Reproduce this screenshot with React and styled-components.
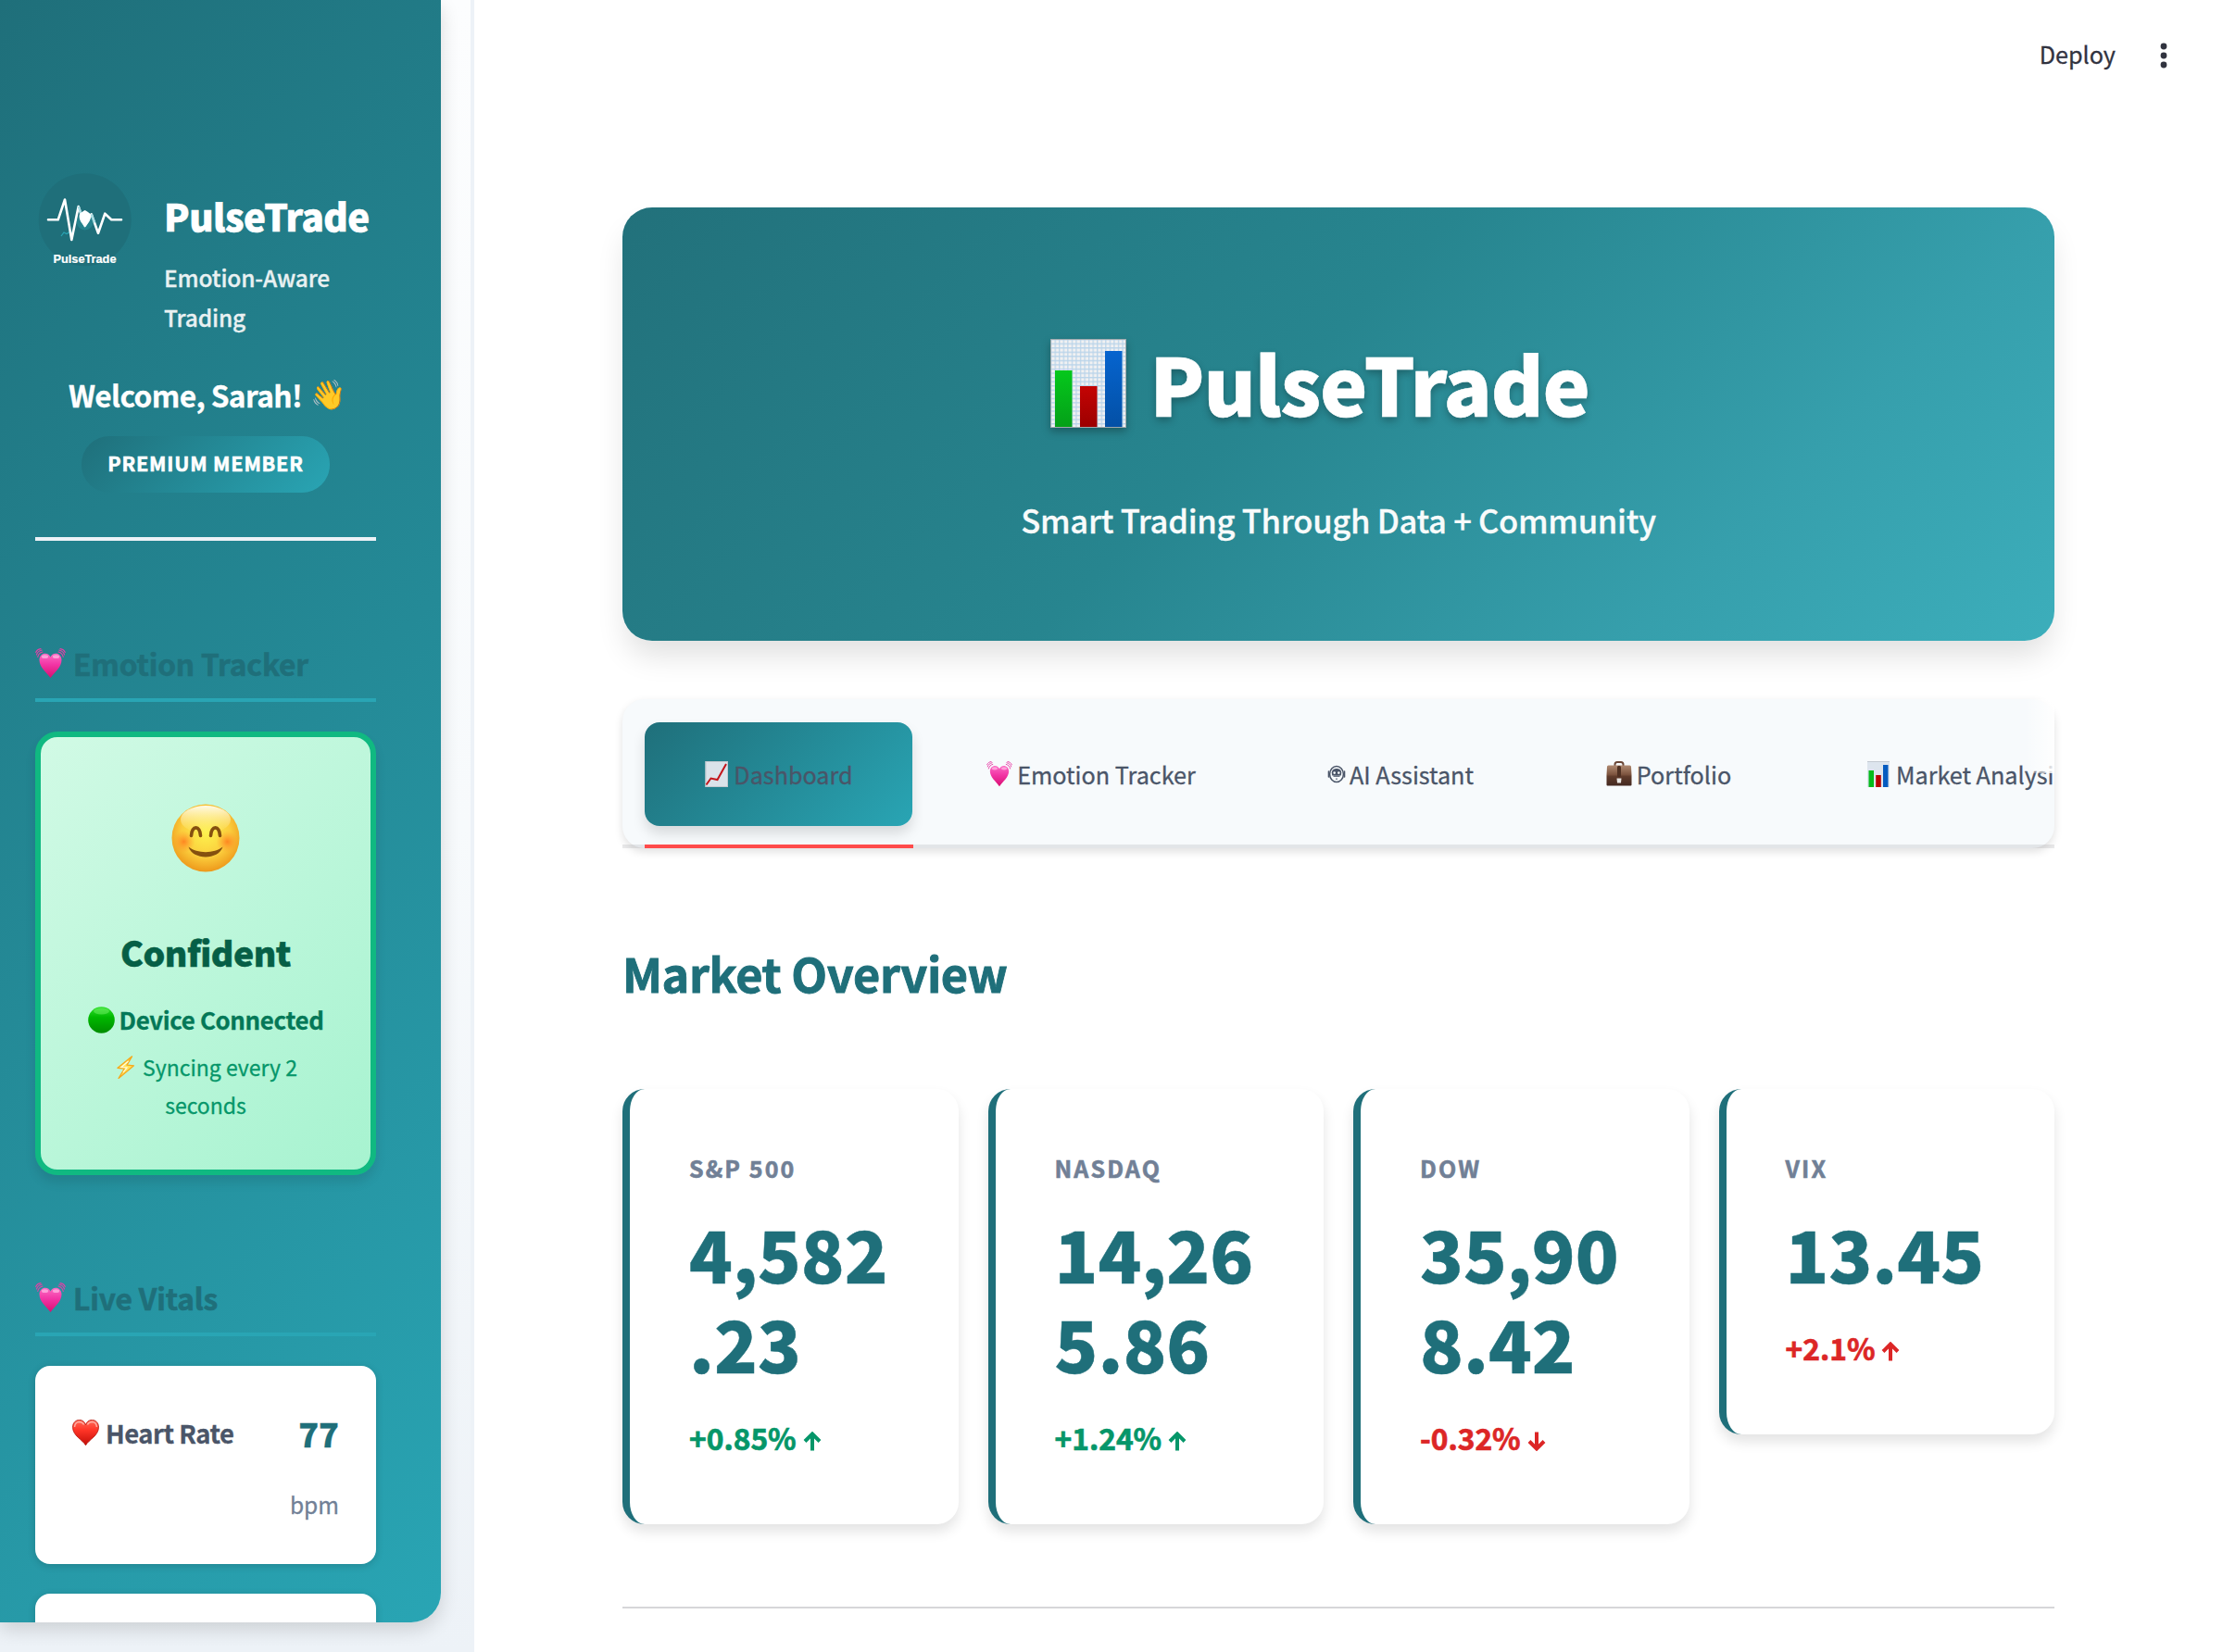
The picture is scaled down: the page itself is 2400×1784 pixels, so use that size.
import React from "react";
import styled, { createGlobalStyle } from "styled-components";

const FONT = `"Noto Sans CJK SC", "Noto Sans", sans-serif`;
const DARK = "#1f6f7a";
const TEAL = "#29a5b4";

const Global = createGlobalStyle`
  * { box-sizing: border-box; }
  body { margin: 0; background: #ffffff; font-family: ${FONT}; }
  svg { display: block; flex: none; }
`;

const Page = styled.div`
  display: flex;
  width: 2400px;
  height: 1784px;
  overflow: hidden;
  background: #ffffff;
  -webkit-text-stroke: 0.3px currentColor;
`;

/* ---------- sidebar ---------- */

const Sidebar = styled.aside`
  width: 512px;
  height: 1784px;
  flex: none;
  border-right: 4px solid #edf2f7;
  background: linear-gradient(180deg, #fcfdfe 0%, #f7fafc 50%, #edf2f7 100%);
`;

const Panel = styled.div`
  width: 476px;
  height: 1752px;
  padding: 183px 70px 0 38px;
  overflow: hidden;
  display: flex;
  flex-direction: column;
  border-radius: 0 0 32px 0;
  background: linear-gradient(135deg, ${DARK} 0%, ${TEAL} 100%);
  box-shadow: 0 8px 20px rgba(0, 0, 0, 0.14);
  > * { flex: none; }
`;

const Brand = styled.div`
  display: flex;
  gap: 31px;
  height: 181px;
`;

const BrandText = styled.div`
  display: flex;
  flex-direction: column;
  padding-top: 26px;
  white-space: nowrap;
`;

const BrandName = styled.div`
  font-size: 40.3px;
  font-weight: 900;
  line-height: 48px;
  letter-spacing: -0.5px;
  color: #ffffff;
  -webkit-text-stroke-width: 0.6px;
`;

const BrandTag = styled.div`
  margin-top: 21px;
  font-size: 24.5px;
  font-weight: 500;
  line-height: 43px;
  letter-spacing: -0.15px;
  color: #e9f1f2;
`;

const Welcome = styled.div`
  display: flex;
  justify-content: center;
  align-items: center;
  gap: 9px;
  margin-top: 42px;
  padding-left: 2px;
  height: 40px;
  font-size: 31.7px;
  font-weight: 700;
  line-height: 40px;
  letter-spacing: -0.63px;
  color: #ffffff;
`;

const Wave = styled.span`
  font-family: "Noto Color Emoji", sans-serif;
  font-size: 31px;
  line-height: 36px;
  letter-spacing: 0;
  width: 37px;
  margin-top: 1px;
  -webkit-text-stroke-width: 0;
`;

const Badge = styled.div`
  align-self: center;
  width: 268px;
  height: 61px;
  margin-top: 25px;
  border-radius: 30px;
  background: linear-gradient(135deg, ${DARK} 0%, ${TEAL} 100%);
  color: #ffffff;
  font-size: 21.6px;
  font-weight: 700;
  line-height: 58px;
  letter-spacing: 0.8px;
  text-align: center;
  -webkit-text-stroke-width: 0.6px;
`;

const Rule = styled.div`
  height: 4px;
  margin-top: 48px;
  background: #edf2f7;
`;

const SectionTitle = styled.h3`
  display: flex;
  align-items: center;
  gap: 8px;
  height: 63px;
  margin: 111px 0 32px;
  padding-bottom: 17px;
  border-bottom: 4px solid ${TEAL};
  font-size: 31.7px;
  font-weight: 700;
  line-height: 40px;
  letter-spacing: -0.16px;
  color: ${DARK};
  -webkit-text-stroke-width: 0.6px;
`;

const MoodCard = styled.div`
  display: flex;
  flex-direction: column;
  align-items: center;
  height: 479px;
  padding-top: 72px;
  border: 6px solid #10b981;
  border-radius: 24px;
  background: linear-gradient(135deg, #d1fae5 0%, #a7f3d0 100%);
  box-shadow: 0 8px 12px rgba(0, 0, 0, 0.1);
`;

const Mood = styled.div`
  margin-top: 64px;
  font-size: 37.4px;
  font-weight: 900;
  line-height: 44px;
  letter-spacing: -0.5px;
  color: #065f46;
  -webkit-text-stroke-width: 0.5px;
`;

const Device = styled.div`
  display: flex;
  align-items: center;
  gap: 5px;
  margin-top: 28px;
  font-size: 25.9px;
  font-weight: 700;
  line-height: 46px;
  letter-spacing: -0.37px;
  color: #047857;
`;

const Sync = styled.div`
  display: flex;
  flex-direction: column;
  align-items: center;
  margin-top: 8px;
  font-size: 23px;
  line-height: 41px;
  color: #059669;
`;

const SyncLine = styled.div`
  display: flex;
  align-items: center;
  gap: 6px;
`;

const VitalCard = styled.div`
  display: flex;
  justify-content: space-between;
  height: 214px;
  margin-bottom: 32px;
  padding: 40px 40px 0;
  border-radius: 16px;
  background: #ffffff;
  box-shadow: 0 2px 8px rgba(0, 0, 0, 0.16);
`;

const VitalName = styled.div`
  display: flex;
  align-items: center;
  gap: 7px;
  height: 48px;
  margin-top: 8px;
  font-size: 27.4px;
  font-weight: 700;
  line-height: 48px;
  letter-spacing: -0.48px;
  color: #4a5568;
`;

const VitalReading = styled.div`
  display: flex;
  flex-direction: column;
  align-items: flex-end;
`;

const VitalValue = styled.div`
  font-size: 36px;
  font-weight: 900;
  line-height: 64px;
  color: ${DARK};
`;

const VitalUnit = styled.div`
  margin-top: 24px;
  font-size: 24.5px;
  line-height: 44px;
  color: #718096;
`;

/* ---------- main ---------- */

const Main = styled.main`
  flex: 1;
  display: flex;
  flex-direction: column;
`;

const TopBar = styled.header`
  display: flex;
  justify-content: flex-end;
  gap: 40px;
  height: 120px;
  padding: 38px 52px 0 0;
  font-size: 25.2px;
  line-height: 40px;
  color: #31333f;
`;

const Content = styled.div`
  display: flex;
  flex-direction: column;
  width: 1546px;
  margin: 104px 0 0 160px;
`;

const Hero = styled.section`
  display: flex;
  flex-direction: column;
  align-items: center;
  height: 468px;
  padding-top: 134px;
  border-radius: 32px;
  background: linear-gradient(135deg, #22717b 0%, #27858f 45%, #369fac 77%, #3caebb 100%);
  box-shadow: 0 20px 32px -4px rgba(0, 0, 0, 0.12);
  color: #ffffff;
`;

const HeroTitle = styled.h1`
  display: flex;
  align-items: center;
  gap: 25px;
  height: 110px;
  margin: 0;
  padding-right: 40px;
  font-size: 86.4px;
  font-weight: 900;
  line-height: 110px;
  letter-spacing: -1.2px;
  text-shadow: 0 4px 8px rgba(0, 0, 0, 0.28);
  -webkit-text-stroke-width: 0.6px;
  svg { margin-top: 2px; filter: drop-shadow(0 4px 4px rgba(0, 0, 0, 0.28)); }
`;

const HeroSub = styled.p`
  margin: 65px 0 0;
  font-size: 34.6px;
  font-weight: 500;
  line-height: 56px;
  letter-spacing: -0.3px;
  color: #f8fbfb;
`;

const TabArea = styled.div`
  position: relative;
  margin-top: 63px;
  height: 161px;
`;

const TabList = styled.div`
  display: flex;
  gap: 16px;
  height: 161px;
  padding: 25px 24px 0;
  overflow: hidden;
  border-radius: 24px;
  background: #f7fafc;
  box-shadow: 0 4px 10px rgba(0, 0, 0, 0.12);
`;

const Tab = styled.div`
  display: flex;
  flex: none;
  align-items: center;
  justify-content: ${(p) => (p.$w ? "center" : "flex-start")};
  gap: ${(p) => p.$gap}px;
  width: ${(p) => (p.$w ? `${p.$w}px` : "auto")};
  height: 112px;
  padding: ${(p) => (p.$w ? "0 1px 0 0" : "0 64px 0 65px")};
  border-radius: 16px;
  font-size: 25.2px;
  line-height: 112px;
  white-space: nowrap;
  color: #4a5568;
  svg { margin-top: -1px; }
  ${(p) =>
    p.$active &&
    `background: linear-gradient(135deg, ${DARK} 0%, ${TEAL} 100%);
     box-shadow: 0 8px 14px rgba(0, 0, 0, 0.13);
     padding-right: 0;`}
`;

const TabTrack = styled.div`
  position: absolute;
  left: 0;
  right: 0;
  bottom: 0;
  height: 4px;
  background: rgba(49, 51, 63, 0.1);
`;

const TabMarker = styled.div`
  position: absolute;
  left: 24px;
  bottom: 0;
  width: 290px;
  height: 4px;
  background: #ff4b4b;
`;

const TabFade = styled.div`
  position: absolute;
  right: 0;
  top: 0;
  width: 32px;
  height: 80px;
  background: linear-gradient(90deg, rgba(255, 255, 255, 0), rgba(255, 255, 255, 0.92));
`;

const Heading = styled.h2`
  margin: 101px 0 91px;
  font-size: 50.4px;
  font-weight: 700;
  line-height: 68px;
  letter-spacing: -0.38px;
  color: ${DARK};
  -webkit-text-stroke-width: 0.9px;
`;

const Cards = styled.div`
  display: grid;
  grid-template-columns: repeat(4, 1fr);
  gap: 32px;
  align-items: start;
  height: 470px;
`;

const Card = styled.article`
  padding: 65px 64px 69px;
  border-left: 8px solid ${DARK};
  border-radius: 24px;
  background: #ffffff;
  box-shadow: 0 8px 14px rgba(0, 0, 0, 0.11);
`;

const Label = styled.div`
  font-size: 25px;
  font-weight: 700;
  line-height: 40px;
  letter-spacing: 2.1px;
  color: #718096;
  -webkit-text-stroke-width: 0.6px;
`;

const Value = styled.div`
  margin-top: 23px;
  font-size: 77px;
  font-weight: 900;
  line-height: 97px;
  line-break: anywhere;
  color: ${DARK};
  -webkit-text-stroke-width: 0.5px;
`;

const Delta = styled.div`
  display: flex;
  align-items: center;
  gap: 7px;
  height: 50px;
  margin-top: 29px;
  font-size: 31.7px;
  font-weight: 700;
  line-height: 50px;
  color: ${(p) => (p.$good ? "#059669" : "#dc2626")};
  -webkit-text-stroke-width: 0.7px;
  svg { margin-top: 9px; }
`;

const Divider = styled.hr`
  width: 100%;
  height: 2px;
  margin: 89px 0 0;
  border: 0;
  background: #d6d6d9;
`;

/* ---------- drawings ---------- */

const Logo = () => (
  <svg width="108" height="108" viewBox="38 183 108 108">
    <circle cx="91.7" cy="237.2" r="50" fill={DARK} />
    <path d="M66 255l3-4 3 1.500 4-2.500 3 1" fill="none" stroke={TEAL} strokeWidth="1.200" />
    <polyline
      points="52,237.300 62.700,237.300 70,215.500 77.300,259 84.700,223 91.700,244 98.700,231.300 106,251.700 113.300,230.700 120.300,237.300 131,237.300"
      fill="none" stroke="#fff" strokeWidth="2.600" strokeLinejoin="round" strokeLinecap="round"
    />
    <circle cx="91.7" cy="239.500" r="9" fill="#2f98a5" fillOpacity="0.45" />
    <path d="M84.700 223l3 8M98.700 231.300l3.500 9" stroke="#a5dbe2" strokeWidth="2.200" />
    <path d="M91.700 245.500C88.500 241 85.600 238.500 85.600 233.500C85.600 230 88 229.500 91.700 227C95.400 229.500 98 230 98 233.500C98 238.500 95 241 91.700 245.500Z" fill="#fff" />
    <text x="57.500" y="283.700" textLength="68" fill="#fff" stroke="#fff" strokeWidth="0.200" fontFamily="Liberation Sans, Arial, sans-serif" fontWeight="700" fontSize="12.800">PulseTrade</text>
  </svg>
);

const BeatingHeart = ({ size = 33 }) => (
  <svg width={size} height={size} viewBox="0 0 33 33">
    <defs>
      <linearGradient id="pink" x1="0" y1="0" x2="0" y2="1">
        <stop offset="0" stopColor="#fb6cc4" />
        <stop offset="0.45" stopColor="#f235a5" />
        <stop offset="1" stopColor="#d90f72" />
      </linearGradient>
    </defs>
    <path d="M16.500 32C12 26 4.500 20.500 4.500 12.800C4.500 8.500 7.500 5.800 10.800 5.800C13.500 5.800 15.500 7.300 16.500 9.600C17.500 7.300 19.500 5.800 22.200 5.800C25.500 5.800 28.500 8.500 28.500 12.800C28.500 20.500 21 26 16.500 32Z" fill="url(#pink)" />
    <ellipse cx="10.500" cy="9.200" rx="3.600" ry="1.900" fill="#ffb6e3" opacity="0.75" />
    <ellipse cx="22.500" cy="9.200" rx="3.600" ry="1.900" fill="#ffb6e3" opacity="0.75" />
    <g fill="none" stroke="#e63fa6" strokeWidth="1.100" strokeLinecap="round">
      <path d="M2.800 9.500C3.300 6.500 5.400 4.700 8 4" />
      <path d="M1.500 7C2.300 4.200 4.500 2.600 7.200 2" />
      <path d="M0.700 4.500C1.800 2 3.600 0.900 6 0.600" />
      <path d="M30.200 9.500C29.700 6.500 27.600 4.700 25 4" />
      <path d="M31.500 7C30.700 4.200 28.500 2.600 25.800 2" />
      <path d="M32.300 4.500C31.200 2 29.400 0.900 27 0.600" />
    </g>
  </svg>
);

const Smile = () => (
  <svg width="74" height="74" viewBox="0 0 74 74">
    <defs>
      <radialGradient id="face" cx="0.5" cy="0.42" r="0.6">
        <stop offset="0" stopColor="#fdf24e" />
        <stop offset="0.6" stopColor="#fbcd3c" />
        <stop offset="1" stopColor="#ec9418" />
      </radialGradient>
      <linearGradient id="gloss" x1="0" y1="0" x2="0" y2="1">
        <stop offset="0" stopColor="#fffdf0" stopOpacity="0.95" />
        <stop offset="1" stopColor="#fff9a0" stopOpacity="0" />
      </linearGradient>
      <radialGradient id="blush">
        <stop offset="0" stopColor="#ff7a1c" stopOpacity="0.85" />
        <stop offset="1" stopColor="#ff9a2c" stopOpacity="0" />
      </radialGradient>
    </defs>
    <circle cx="37" cy="37" r="36.500" fill="url(#face)" />
    <ellipse cx="37" cy="17" rx="27" ry="15" fill="url(#gloss)" />
    <circle cx="13.500" cy="41" r="12" fill="url(#blush)" />
    <circle cx="60.500" cy="41" r="12" fill="url(#blush)" />
    <g fill="none" stroke="#85500f" strokeLinecap="round">
      <path d="M21.500 34.500C22 23 31 23 31.500 34.500" strokeWidth="3.600" />
      <path d="M42.500 34.500C43 23 52 23 52.500 34.500" strokeWidth="3.600" />
    </g>
    <path d="M18.500 46.500C28 54 46 54 55.500 46.500C51 61 23 61 18.500 46.500Z" fill="#85500f" />
  </svg>
);

const GreenDot = () => (
  <svg width="29" height="29" viewBox="0 0 29 29">
    <defs>
      <linearGradient id="dot" x1="0" y1="0" x2="0" y2="1">
        <stop offset="0" stopColor="#2fe02c" />
        <stop offset="0.4" stopColor="#00b800" />
        <stop offset="1" stopColor="#008c00" />
      </linearGradient>
    </defs>
    <circle cx="14.500" cy="14.500" r="14.300" fill="url(#dot)" />
    <ellipse cx="14.500" cy="5" rx="8.500" ry="3.400" fill="#8bfa7e" opacity="0.4" />
  </svg>
);

const Bolt = () => (
  <svg width="25" height="25" viewBox="0 0 25 25">
    <path d="M19.500 0.800L4 13.300L11.300 14L5 24.500L21.500 10.800L14 10.200Z" fill="#ffe45c" stroke="#f5a91d" strokeWidth="1.300" strokeLinejoin="round" />
    <path d="M15.500 6L8 12.500L14 13L10 18" fill="none" stroke="#fffbe0" strokeWidth="1.200" />
  </svg>
);

const RedHeart = () => (
  <svg width="29" height="28" viewBox="0 0 29 28">
    <defs>
      <linearGradient id="red" x1="0" y1="0" x2="0" y2="1">
        <stop offset="0" stopColor="#ff6a58" />
        <stop offset="0.4" stopColor="#ff3527" />
        <stop offset="1" stopColor="#c30d08" />
      </linearGradient>
    </defs>
    <path d="M14.500 27.800C11 21.500 0.500 17.500 0.500 8.200C0.500 3.500 3.800 0.400 7.700 0.400C11 0.400 13.500 2.500 14.500 5.600C15.500 2.500 18 0.400 21.300 0.400C25.200 0.400 28.500 3.500 28.500 8.200C28.500 17.500 18 21.500 14.500 27.800Z" fill="url(#red)" stroke="#b5150c" strokeWidth="0.800" />
    <path d="M2.500 8C2.800 4.500 5 2.500 7.700 2.400C10 2.400 11.600 3.500 12.600 5.500M16.400 5.500C17.400 3.500 19 2.400 21.300 2.400C24 2.500 26.200 4.500 26.500 8" fill="none" stroke="#ffc2b8" strokeWidth="1.500" opacity="0.8" />
  </svg>
);

const BarsLarge = () => (
  <svg width="82" height="96" viewBox="0 0 82 96">
    <defs>
      <pattern id="grid" width="4.550" height="4.550" patternUnits="userSpaceOnUse">
        <rect width="4.550" height="4.550" fill="#f1f1f2" />
        <path d="M0 0.700H4.550M0.700 0V4.550" stroke="#b9d4ea" strokeWidth="1.200" />
      </pattern>
      <linearGradient id="g1" x1="0" y1="0" x2="0" y2="1"><stop offset="0" stopColor="#05c81c" /><stop offset="1" stopColor="#04a018" /></linearGradient>
      <linearGradient id="r1" x1="0" y1="0" x2="0" y2="1"><stop offset="0" stopColor="#c40404" /><stop offset="1" stopColor="#9c0000" /></linearGradient>
      <linearGradient id="b1" x1="0" y1="0" x2="0" y2="1"><stop offset="0" stopColor="#0664cf" /><stop offset="1" stopColor="#0350a6" /></linearGradient>
    </defs>
    <rect x="0.500" y="0.500" width="81" height="95" fill="url(#grid)" stroke="#9fa9ad" />
    <rect x="5" y="34" width="18.500" height="61" fill="url(#g1)" />
    <rect x="32" y="51" width="18.500" height="44" fill="url(#r1)" />
    <rect x="59" y="13" width="18.500" height="82" fill="url(#b1)" />
  </svg>
);

const BarsSmall = () => (
  <svg width="24" height="28" viewBox="0 0 24 28">
    <rect width="24" height="28" fill="#dde5ee" />
    <rect width="24" height="1" fill="#c3cad2" />
    <rect x="1.500" y="10" width="5.500" height="18" fill="#04bb1a" />
    <rect x="9.200" y="15" width="5.600" height="13" fill="#b90303" />
    <rect x="17" y="4" width="5.500" height="24" fill="#055bc0" />
  </svg>
);

const LineChart = () => (
  <svg width="28" height="28" viewBox="0 0 28 28">
    <rect x="1.500" width="24.500" height="28" fill="#dbe3ea" />
    <rect x="2" y="0.500" width="23.500" height="27" fill="none" stroke="#c3c9cf" />
    <path d="M2.500 25.500L7.500 18.500L14.500 20L24 3" fill="none" stroke="#c4161c" strokeWidth="2" />
  </svg>
);

const Robot = () => (
  <svg width="20" height="20" viewBox="0 0 20 20">
    <ellipse cx="10" cy="10" rx="7.400" ry="8.500" fill="none" stroke="#4a5568" strokeWidth="1.500" />
    <path d="M1.500 7v6M18.500 7v6" stroke="#4a5568" strokeWidth="1.600" strokeLinecap="round" />
    <path d="M4.800 8.300C5 5 7.500 4 10 4S15 5 15.200 8.300L14.800 11.500H5.200Z" fill="#4a5568" />
    <circle cx="7.700" cy="8.600" r="1.300" fill="#f7fafc" />
    <circle cx="12.300" cy="8.600" r="1.300" fill="#f7fafc" />
    <path d="M6.500 11.500H13.500V12.800H6.500Z" fill="#4a5568" />
    <rect x="9.300" y="14.500" width="1.400" height="1.400" fill="#4a5568" />
  </svg>
);

const Briefcase = () => (
  <svg width="28" height="27" viewBox="0 0 28 27">
    <defs>
      <linearGradient id="case" x1="0" y1="0" x2="0" y2="1">
        <stop offset="0" stopColor="#b08a72" />
        <stop offset="0.45" stopColor="#7d543f" />
        <stop offset="0.55" stopColor="#5f3b2b" />
        <stop offset="1" stopColor="#432820" />
      </linearGradient>
    </defs>
    <path d="M9.500 5V3.500C9.500 1.800 10.500 1 12 1H16C17.500 1 18.500 1.800 18.500 3.500V5" fill="none" stroke="#6a4636" strokeWidth="2" />
    <path d="M1 6Q1 4.500 2.500 4.500H25.500Q27 4.500 27 6L27.500 15V25.500Q27.500 26.500 26.500 26.500H1.500Q0.500 26.500 0.500 25.500V15Z" fill="url(#case)" />
    <rect x="12" y="5" width="4" height="12" rx="1.500" fill="#4f3022" />
    <path d="M11.500 18.500H16.500L16 23.500H12Z" fill="#e9e6e3" />
  </svg>
);

const Dots = () => (
  <svg width="24" height="40" viewBox="0 0 24 40" fill="#31333f">
    <circle cx="12" cy="12" r="3.400" />
    <circle cx="12" cy="22" r="3.400" />
    <circle cx="12" cy="32" r="3.400" />
  </svg>
);

const Arrow = ({ down }) => (
  <svg width="20" height="21" viewBox="0 0 20 21">
    <path
      d={down ? "M10 0.500V17M2 10.500L10 18.500L18 10.500" : "M10 20.500V4M2 10.500L10 2.500L18 10.500"}
      fill="none" stroke="currentColor" strokeWidth="4"
    />
  </svg>
);

const TABS = [
  { name: "Dashboard", icon: <LineChart />, w: 289, gap: 4, active: true },
  { name: "Emotion Tracker", icon: <BeatingHeart size={28} />, w: 355, gap: 5 },
  { name: "AI Assistant", icon: <Robot />, w: 281, gap: 4 },
  { name: "Portfolio", icon: <Briefcase />, w: 266, gap: 5 },
  { name: "Market Analysis", icon: <BarsSmall />, gap: 7 },
];

const INDICES = [
  { label: "S&P 500", value: "4,582.23", delta: "+0.85%", good: true },
  { label: "NASDAQ", value: "14,265.86", delta: "+1.24%", good: true },
  { label: "DOW", value: "35,908.42", delta: "-0.32%", down: true },
  { label: "VIX", value: "13.45", delta: "+2.1%" },
];

export default function App() {
  return (
    <Page>
      <Global />
      <Sidebar>
        <Panel>
          <Brand>
            <Logo />
            <BrandText>
              <BrandName>PulseTrade</BrandName>
              <BrandTag>Emotion-Aware<br />Trading</BrandTag>
            </BrandText>
          </Brand>
          <Welcome>Welcome, Sarah!<Wave>👋</Wave></Welcome>
          <Badge>PREMIUM MEMBER</Badge>
          <Rule />
          <SectionTitle><BeatingHeart />Emotion Tracker</SectionTitle>
          <MoodCard>
            <Smile />
            <Mood>Confident</Mood>
            <Device><GreenDot />Device Connected</Device>
            <Sync>
              <SyncLine><Bolt />Syncing every 2</SyncLine>
              <SyncLine>seconds</SyncLine>
            </Sync>
          </MoodCard>
          <SectionTitle><BeatingHeart />Live Vitals</SectionTitle>
          <VitalCard>
            <VitalName><RedHeart />Heart Rate</VitalName>
            <VitalReading>
              <VitalValue>77</VitalValue>
              <VitalUnit>bpm</VitalUnit>
            </VitalReading>
          </VitalCard>
          <VitalCard />
        </Panel>
      </Sidebar>
      <Main>
        <TopBar>Deploy<Dots /></TopBar>
        <Content>
          <Hero>
            <HeroTitle><BarsLarge />PulseTrade</HeroTitle>
            <HeroSub>Smart Trading Through Data + Community</HeroSub>
          </Hero>
          <TabArea>
            <TabList>
              {TABS.map((t) => (
                <Tab key={t.name} $w={t.w} $gap={t.gap} $active={t.active}>
                  {t.icon}{t.name}
                </Tab>
              ))}
            </TabList>
            <TabTrack />
            <TabMarker />
            <TabFade />
          </TabArea>
          <Heading>Market Overview</Heading>
          <Cards>
            {INDICES.map((i) => (
              <Card key={i.label}>
                <Label>{i.label}</Label>
                <Value>{i.value}</Value>
                <Delta $good={i.good}>{i.delta}<Arrow down={i.down} /></Delta>
              </Card>
            ))}
          </Cards>
          <Divider />
        </Content>
      </Main>
    </Page>
  );
}
